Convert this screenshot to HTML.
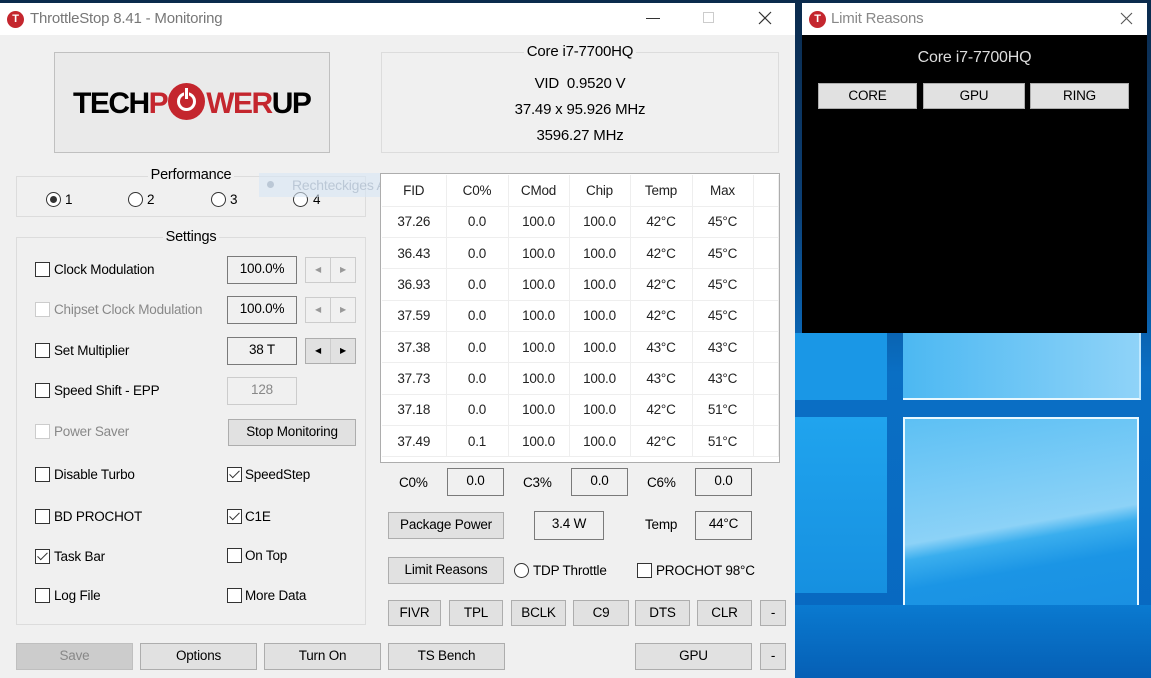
<!DOCTYPE html>
<html><head><meta charset="utf-8">
<style>
*{box-sizing:border-box;margin:0;padding:0}
body{width:1151px;height:678px;overflow:hidden;position:relative;background:#0b2b4d;font-family:"Liberation Sans",sans-serif;font-size:13.5px;color:#000;letter-spacing:-0.2px}
.a{position:absolute}
.win{position:absolute;left:0;top:3px;width:795px;height:675px;background:#f0f0f0}
.tb{position:absolute;left:0;top:0;width:100%;height:32px;background:#fff}
.ico{position:absolute;width:17px;height:17px;border-radius:50%;background:#c4262e;color:#fff;font-weight:bold;font-size:11px;text-align:center;line-height:17px}
.tt{position:absolute;font-size:15px;color:#777;top:7px}
.grp{position:absolute;border:1px solid #dcdcdc}
.btn{position:absolute;background:#e1e1e1;border:1px solid #adadad;text-align:center;line-height:24px}
.box{position:absolute;border:1px solid #7a7a7a;background:#f0f0f0;text-align:center;line-height:24px}
.cb{position:absolute;width:15px;height:15px;border:1px solid #333;background:#fff}
.cb.d{border-color:#ccc}
.cb.c::after{content:"";position:absolute;left:4px;top:0px;width:4px;height:9px;border:solid #333;border-width:0 1.5px 1.5px 0;transform:rotate(45deg)}
.lb{position:absolute;line-height:16px;white-space:nowrap}
.g{color:#888}
.rd{position:absolute;width:15px;height:15px;border:1px solid #333;border-radius:50%;background:#fff}
.rd.s::after{content:"";position:absolute;left:3px;top:3px;width:7px;height:7px;border-radius:50%;background:#333}
.sp{position:absolute;width:51px;height:26px;border:1px solid #ccc;background:#f0f0f0}
.sp::before{content:"";position:absolute;left:24px;top:0;height:24px;border-left:1px solid #ccc}
.sp.on{border-color:#adadad;background:#e1e1e1}
.sp span{position:absolute;top:0;width:24px;text-align:center;font-size:8px;line-height:24px;color:#999}
.sp.on span{color:#000}
table{position:absolute;left:382px;top:172px;border-collapse:collapse;background:#fff}
td{height:31.3px;text-align:center;border-right:1px solid #eee;border-bottom:1px solid #eee;font-size:13.5px;color:#222}
</style></head><body>
<!-- desktop -->
<div class="a" style="left:795px;top:0;width:356px;height:678px;background:linear-gradient(180deg,#0b2b4d 0%,#0b3f75 30%,#0a6fc4 55%,#0867c0 100%)"></div>
<div class="a" style="left:795px;top:333px;width:92px;height:67px;background:#1a97e6"></div>
<div class="a" style="left:795px;top:417px;width:92px;height:176px;background:linear-gradient(180deg,#20a4ee,#1690e0)"></div>
<div class="a" style="left:903px;top:333px;width:238px;height:67px;background:linear-gradient(90deg,#4cb8f2,#8fd3f8);border-right:2px solid #bfe8ff;border-bottom:2px solid #e8f8ff"></div>
<div class="a" style="left:903px;top:417px;width:236px;height:190px;background:linear-gradient(170deg,#5dc0f4 0%,#8cd2f7 55%,#3aaeee 62%,#1b95e5 75%,#1a90e2 100%);border:2px solid #e8f8ff;border-bottom:none"></div>
<div class="a" style="left:795px;top:605px;width:356px;height:73px;background:linear-gradient(180deg,#0a7ad0,#055fb5)"></div>

<!-- main window -->
<div class="win">
 <div class="tb"><div class="ico" style="left:7px;top:8px">T</div><div class="tt" style="left:30px">ThrottleStop 8.41 - Monitoring</div>
 <div class="a" style="left:646px;top:15px;width:14px;border-top:1px solid #333"></div>
 <div class="a" style="left:703px;top:9px;width:11px;height:11px;border:1px solid #ccc"></div>
 <svg class="a" style="left:758px;top:8px" width="14" height="14"><path d="M1 1L13 13M13 1L1 13" stroke="#333" stroke-width="1.2"/></svg>
 </div>
</div>
<div class="a" style="left:0;top:35px;width:795px;height:643px;background:#f0f0f0">
 <!-- logo -->
 <div class="a" style="left:54px;top:17px;width:276px;height:101px;border:1px solid #c0c0c0;background:#eaeaea"></div>
 <div class="a" style="left:73px;top:48px;font-size:30px;font-weight:bold;letter-spacing:-1.5px;line-height:36px"><span>TECH</span><span style="color:#c4262e">P<span style="display:inline-block;width:37px;height:37px;border-radius:50%;background:#c4262e;vertical-align:-7px;position:relative;margin:0 1px"><span style="position:absolute;left:9px;top:9px;width:19px;height:19px;border:3px solid #fff;border-radius:50%"></span><span style="position:absolute;left:16px;top:4px;width:5px;height:13px;background:#fff;border:1px solid #c4262e"></span></span>WER</span><span>UP</span></div>
 <!-- cpu info -->
 <div class="grp" style="left:381px;top:17px;width:398px;height:101px"></div>
 <div class="a" style="left:381px;top:8px;width:398px;text-align:center;font-size:15px;line-height:18px"><span style="background:#f0f0f0;padding:0 3px">Core i7-7700HQ</span></div>
 <div class="a" style="left:381px;top:36px;width:398px;text-align:center;font-size:15px;line-height:26px">VID&nbsp; 0.9520 V<br>37.49 x 95.926 MHz<br>3596.27 MHz</div>
 <!-- performance -->
 <div class="grp" style="left:16px;top:141px;width:350px;height:41px"></div>
 <div class="a" style="left:16px;top:132px;width:350px;text-align:center;font-size:14.5px"><span style="background:#f0f0f0;padding:0 3px">Performance</span></div>
 <div class="rd s" style="left:46px;top:157px"></div><div class="lb" style="left:65px;top:157px">1</div>
 <div class="rd" style="left:128px;top:157px"></div><div class="lb" style="left:147px;top:157px">2</div>
 <div class="rd" style="left:211px;top:157px"></div><div class="lb" style="left:230px;top:157px">3</div>
 <div class="rd" style="left:293px;top:157px"></div><div class="lb" style="left:313px;top:157px">4</div>
 <div class="a" style="left:259px;top:138px;width:180px;height:24px;background:rgba(215,230,245,0.6);color:rgba(150,165,185,0.5);font-size:14px;line-height:24px;padding-left:33px;white-space:nowrap;overflow:hidden">Rechteckiges Ausschneiden<span class="a" style="left:8px;top:8px;width:7px;height:7px;border-radius:50%;background:rgba(150,165,185,0.5)"></span></div>
 <!-- settings -->
 <div class="grp" style="left:16px;top:202px;width:350px;height:388px"></div>
 <div class="a" style="left:16px;top:194px;width:350px;text-align:center;font-size:14.5px"><span style="background:#f0f0f0;padding:0 3px">Settings</span></div>
 <div class="cb" style="left:35px;top:227px"></div><div class="lb" style="left:54px;top:227px">Clock Modulation</div>
 <div class="box" style="left:227px;top:221px;width:70px;height:28px">100.0%</div>
 <div class="sp" style="left:305px;top:222px"><span style="left:0">◀</span><span style="left:25px">▶</span></div>
 <div class="cb d" style="left:35px;top:267px"></div><div class="lb g" style="left:54px;top:267px">Chipset Clock Modulation</div>
 <div class="box" style="left:227px;top:261px;width:70px;height:28px">100.0%</div>
 <div class="sp" style="left:305px;top:262px"><span style="left:0">◀</span><span style="left:25px">▶</span></div>
 <div class="cb" style="left:35px;top:308px"></div><div class="lb" style="left:54px;top:308px">Set Multiplier</div>
 <div class="box" style="left:227px;top:302px;width:70px;height:28px">38 T</div>
 <div class="sp on" style="left:305px;top:303px"><span style="left:0">◀</span><span style="left:25px">▶</span></div>
 <div class="cb" style="left:35px;top:348px"></div><div class="lb" style="left:54px;top:348px">Speed Shift - EPP</div>
 <div class="box g" style="left:227px;top:342px;width:70px;height:28px;border-color:#ccc">128</div>
 <div class="cb d" style="left:35px;top:389px"></div><div class="lb g" style="left:54px;top:389px">Power Saver</div>
 <div class="btn" style="left:228px;top:384px;width:128px;height:27px">Stop Monitoring</div>
 <div class="cb" style="left:35px;top:432px"></div><div class="lb" style="left:54px;top:432px">Disable Turbo</div>
 <div class="cb c" style="left:227px;top:432px"></div><div class="lb" style="left:245px;top:432px">SpeedStep</div>
 <div class="cb" style="left:35px;top:474px"></div><div class="lb" style="left:54px;top:474px">BD PROCHOT</div>
 <div class="cb c" style="left:227px;top:474px"></div><div class="lb" style="left:245px;top:474px">C1E</div>
 <div class="cb c" style="left:35px;top:514px"></div><div class="lb" style="left:54px;top:514px">Task Bar</div>
 <div class="cb" style="left:227px;top:513px"></div><div class="lb" style="left:245px;top:513px">On Top</div>
 <div class="cb" style="left:35px;top:553px"></div><div class="lb" style="left:54px;top:553px">Log File</div>
 <div class="cb" style="left:227px;top:553px"></div><div class="lb" style="left:245px;top:553px">More Data</div>
 <!-- bottom -->
 <div class="btn g" style="left:16px;top:608px;width:117px;height:27px;background:#cccccc;border-color:#bfbfbf">Save</div>
 <div class="btn" style="left:140px;top:608px;width:117px;height:27px">Options</div>
 <div class="btn" style="left:264px;top:608px;width:117px;height:27px">Turn On</div>
 <div class="btn" style="left:388px;top:608px;width:117px;height:27px">TS Bench</div>
 <div class="btn" style="left:635px;top:608px;width:117px;height:27px">GPU</div>
 <div class="btn" style="left:760px;top:608px;width:26px;height:27px">-</div>
 <!-- right lower -->
 <div class="lb" style="left:399px;top:440px">C0%</div><div class="box" style="left:447px;top:433px;width:57px;height:28px">0.0</div>
 <div class="lb" style="left:523px;top:440px">C3%</div><div class="box" style="left:571px;top:433px;width:57px;height:28px">0.0</div>
 <div class="lb" style="left:647px;top:440px">C6%</div><div class="box" style="left:695px;top:433px;width:57px;height:28px">0.0</div>
 <div class="btn" style="left:388px;top:477px;width:116px;height:27px">Package Power</div>
 <div class="box" style="left:534px;top:476px;width:70px;height:29px">3.4 W</div>
 <div class="lb" style="left:645px;top:482px">Temp</div>
 <div class="box" style="left:695px;top:476px;width:57px;height:29px">44°C</div>
 <div class="btn" style="left:388px;top:522px;width:116px;height:27px">Limit Reasons</div>
 <div class="rd" style="left:514px;top:528px"></div><div class="lb" style="left:533px;top:528px">TDP Throttle</div>
 <div class="cb" style="left:637px;top:528px"></div><div class="lb" style="left:656px;top:528px">PROCHOT 98°C</div>
 <div class="btn" style="left:388px;top:565px;width:53px;height:26px">FIVR</div>
 <div class="btn" style="left:449px;top:565px;width:54px;height:26px">TPL</div>
 <div class="btn" style="left:511px;top:565px;width:55px;height:26px">BCLK</div>
 <div class="btn" style="left:573px;top:565px;width:56px;height:26px">C9</div>
 <div class="btn" style="left:635px;top:565px;width:55px;height:26px">DTS</div>
 <div class="btn" style="left:697px;top:565px;width:55px;height:26px">CLR</div>
 <div class="btn" style="left:760px;top:565px;width:26px;height:26px">-</div>
</div>
<!-- table -->
<div class="a" style="left:380px;top:173px;width:400px;height:290px;border:1px solid #adadad;background:#fff"></div>
<table style="top:175px">
<tr><td style="width:64px">FID</td><td style="width:62px">C0%</td><td style="width:61px">CMod</td><td style="width:61px">Chip</td><td style="width:62px">Temp</td><td style="width:61px">Max</td><td style="width:25px"></td></tr>
<tr><td>37.26</td><td>0.0</td><td>100.0</td><td>100.0</td><td>42°C</td><td>45°C</td><td></td></tr>
<tr><td>36.43</td><td>0.0</td><td>100.0</td><td>100.0</td><td>42°C</td><td>45°C</td><td></td></tr>
<tr><td>36.93</td><td>0.0</td><td>100.0</td><td>100.0</td><td>42°C</td><td>45°C</td><td></td></tr>
<tr><td>37.59</td><td>0.0</td><td>100.0</td><td>100.0</td><td>42°C</td><td>45°C</td><td></td></tr>
<tr><td>37.38</td><td>0.0</td><td>100.0</td><td>100.0</td><td>43°C</td><td>43°C</td><td></td></tr>
<tr><td>37.73</td><td>0.0</td><td>100.0</td><td>100.0</td><td>43°C</td><td>43°C</td><td></td></tr>
<tr><td>37.18</td><td>0.0</td><td>100.0</td><td>100.0</td><td>42°C</td><td>51°C</td><td></td></tr>
<tr><td>37.49</td><td>0.1</td><td>100.0</td><td>100.0</td><td>42°C</td><td>51°C</td><td></td></tr>
</table>
<div class="a" style="left:381px;top:458px;width:398px;height:4px;background:#fff"></div>
<!-- limit reasons window -->
<div class="a" style="left:802px;top:3px;width:345px;height:330px;background:#000">
 <div class="tb" style="height:32px"><div class="ico" style="left:7px;top:8px">T</div><div class="tt" style="left:29px;color:#888">Limit Reasons</div>
 <svg class="a" style="left:318px;top:9px" width="13" height="13"><path d="M1 1L12 12M12 1L1 12" stroke="#555" stroke-width="1.1"/></svg></div>
 <div class="a" style="left:0;top:46px;width:345px;text-align:center;color:#ddd;font-size:16px">Core i7-7700HQ</div>
 <div class="btn" style="left:16px;top:80px;width:99px;height:26px">CORE</div>
 <div class="btn" style="left:121px;top:80px;width:102px;height:26px">GPU</div>
 <div class="btn" style="left:228px;top:80px;width:99px;height:26px">RING</div>
</div>
</body></html>
